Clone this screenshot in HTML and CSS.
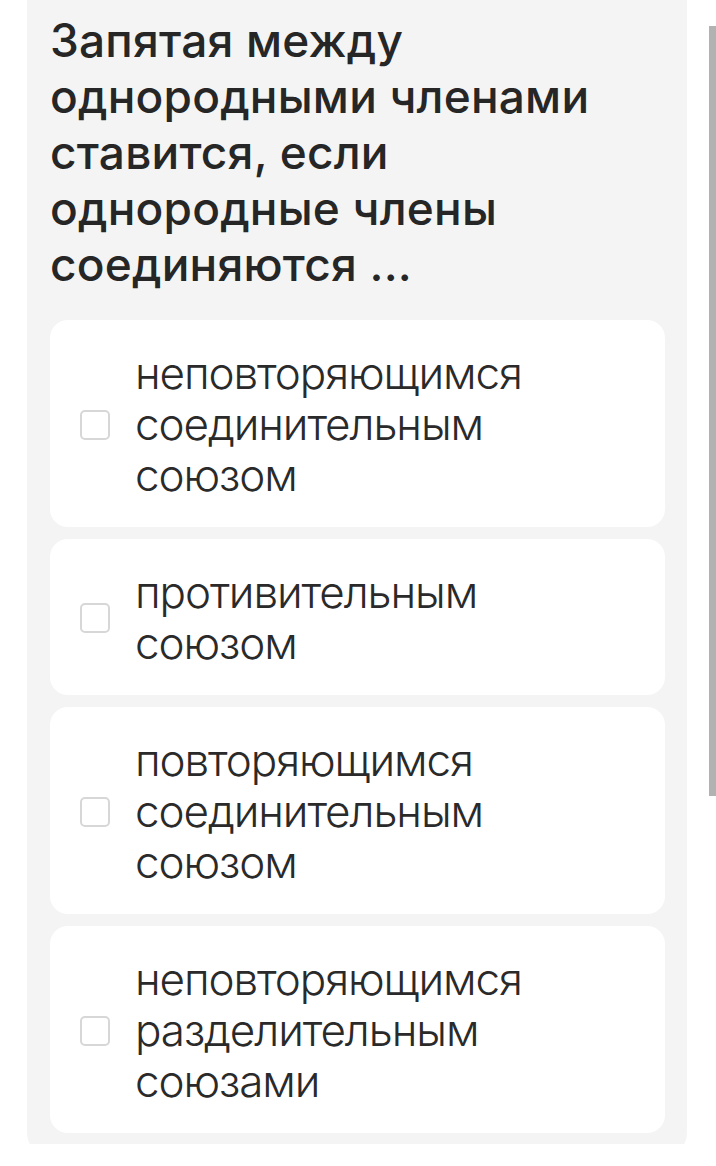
FILE: index.html
```html
<!DOCTYPE html>
<html lang="ru">
<head>
<meta charset="utf-8">
<title>Запятая между однородными членами</title>
<link rel="stylesheet" href="styles.css">
</head>
<body>
<div class="page">
  <section class="quiz">
    <h2 class="quiz__question">Запятая между однородными членами ставится, если однородные члены соединяются ...</h2>
    <div class="quiz__options">
      <label class="option">
        <input class="option__input" type="checkbox">
        <span class="option__box"></span>
        <span class="option__text">неповторяющимся соединительным союзом</span>
      </label>
      <label class="option">
        <input class="option__input" type="checkbox">
        <span class="option__box"></span>
        <span class="option__text">противительным союзом</span>
      </label>
      <label class="option">
        <input class="option__input" type="checkbox">
        <span class="option__box"></span>
        <span class="option__text">повторяющимся соединительным союзом</span>
      </label>
      <label class="option">
        <input class="option__input" type="checkbox">
        <span class="option__box"></span>
        <span class="option__text">неповторяющимся разделительным союзами</span>
      </label>
    </div>
  </section>
  <div class="scrollbar"></div>
</div>
</body>
</html>
```
FILE: styles.css
```css
* { box-sizing: border-box; }

html, body {
  margin: 0;
  padding: 0;
  background: #ffffff;
}

body {
  font-family: "Inter", "Noto Sans", sans-serif;
  color: #2b2b2b;
  overflow: hidden;
}

.page {
  width: 716px;
  height: 1166px;
}

/* grey question panel; its top edge is scrolled out of view */
.quiz {
  width: 660px;
  margin: -22px 0 0 27px;
  padding: 34px 22px 22px 23px;
  background: #f4f4f4;
  border-radius: 22px;
}

.quiz__question {
  margin: 0 0 28px;
  max-width: 600px;
  font-size: 46px;
  line-height: 56px;
  font-weight: 500;
  color: #262626;
  letter-spacing: 0.2px;
}

.quiz__options {
  display: flex;
  flex-direction: column;
  gap: 12px;
}

.option {
  display: flex;
  align-items: center;
  gap: 25px;
  padding: 28px 30px 26px 30px;
  background: #ffffff;
  border-radius: 18px;
  cursor: pointer;
}

.option__input {
  display: none;
}

.option__box {
  flex: none;
  width: 30px;
  height: 30px;
  border: 2px solid #d7d7d7;
  border-radius: 5px;
  background: #ffffff;
}

.option__text {
  flex: 1;
  padding-right: 20px;
  font-size: 44px;
  line-height: 51px;
  font-weight: 300;
  letter-spacing: -1.1px;
  color: #2a2a2a;
}

/* overlay scrollbar thumb at the right edge */
.scrollbar {
  position: fixed;
  top: 26px;
  right: 0;
  width: 7px;
  height: 770px;
  background: #b2b2b2;
}
```
